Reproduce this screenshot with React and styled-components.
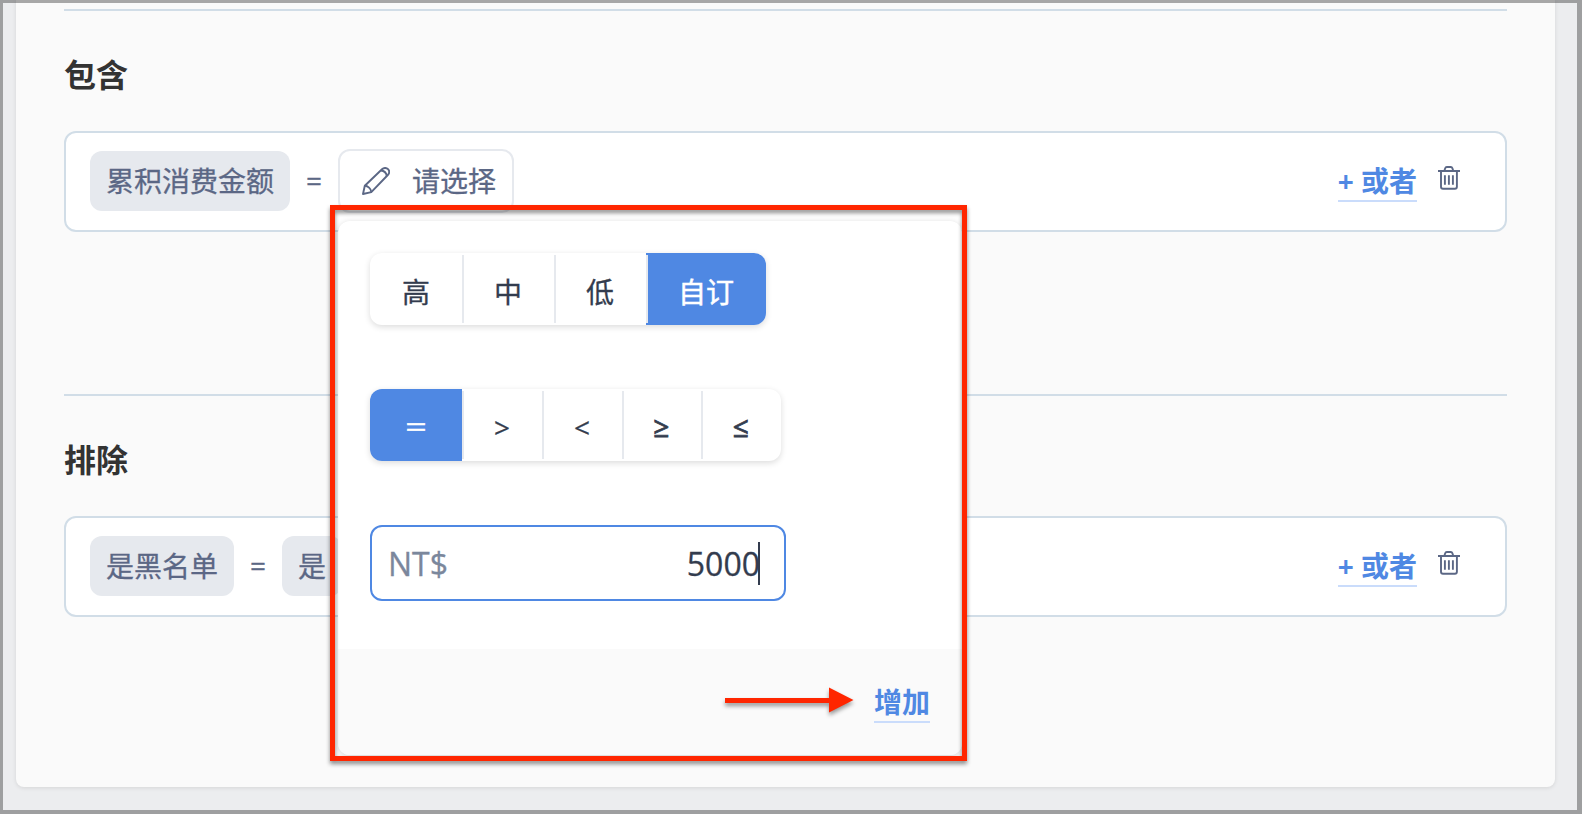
import styled, { createGlobalStyle, css } from 'styled-components';

const GlobalStyle = createGlobalStyle`
  * {
    box-sizing: border-box;
  }

  body {
    margin: 0;
    font-family: 'Open Sans', 'Noto Sans CJK SC', sans-serif;
    font-size: 28px;
    line-height: 40px;
    color: #333c4e;
    -webkit-text-stroke: 0.3px currentColor;
  }

  button,
  input {
    font: inherit;
    border: 0;
    padding: 0;
    background: none;
  }
`;

const Page = styled.div`
  position: relative;
  width: 1582px;
  height: 814px;
  padding: 0 27px 27px 16px;
  overflow: hidden;
  background: #ecedef;
`;

const Frame = styled.div`
  position: absolute;
  inset: 0;
  border: solid rgba(0, 0, 0, 0.33);
  border-width: 3px 5px 4px 3px;
`;

const Card = styled.main`
  height: 787px;
  padding: 9px 48px 0;
  background: #fafafa;
  border-radius: 0 0 8px 8px;
  box-shadow: 0 1px 4px rgba(0, 0, 0, 0.1);
`;

const Section = styled.section`
  height: 385px;
  border-top: 2px solid #d1dde7;
`;

const Title = styled.h2`
  margin: 0;
  padding-top: 40px;
  height: 120px;
  font-size: 32px;
  line-height: 48px;
  font-weight: 700;
  color: #333;
  -webkit-text-stroke: 0;
`;

const Row = styled.div`
  display: flex;
  align-items: flex-start;
  gap: 16px;
  height: 101px;
  padding: 16px 45px 0 24px;
  background: #fff;
  border: 2px solid #d1dde7;
  border-radius: 12px;
  color: #5b6785;
`;

const Chip = styled.span`
  margin-top: 2px;
  height: 60px;
  padding: 10px 16px;
  border-radius: 12px;
  background: #e6e9ee;
`;

const Operator = styled.span`
  width: 16px;
  margin-top: 11px;
`;

const SelectButton = styled.button`
  display: flex;
  gap: 22px;
  width: 176px;
  height: 64px;
  padding: 10px 16px 0 22px;
  border: 2px solid #e6e9ee;
  border-radius: 12px;
  color: inherit;

  svg {
    margin-top: 6px;
  }
`;

const Actions = styled.div`
  display: flex;
  gap: 21px;
  margin-left: auto;

  svg {
    margin-top: 17px;
  }
`;

const LinkButton = styled.button`
  height: 42px;
  margin-top: ${({ $top }) => $top}px;
  padding-top: 1px;
  font-weight: 700;
  line-height: 40px;
  white-space: nowrap;
  color: #4f88e3;
  border-bottom: 2px solid #cadcfb;
  -webkit-text-stroke: 0;
`;

const Popup = styled.div`
  position: absolute;
  left: 338px;
  top: 221px;
  width: 624px;
  height: 534px;
  border-radius: 12px;
  overflow: hidden;
  background: #fff;
  box-shadow: 0 1px 6px rgba(0, 0, 0, 0.15);
`;

const PopupBody = styled.div`
  display: flex;
  flex-direction: column;
  align-items: flex-start;
  gap: 64px;
  height: 428px;
  padding: 32px 32px 0;
`;

const PopupFooter = styled.div`
  display: flex;
  justify-content: flex-end;
  height: 106px;
  padding-right: 32px;
  background: #fafafa;
`;

const Segments = styled.div`
  display: flex;
  height: 72px;
  border-radius: 12px;
  box-shadow: 0 2px 6px rgba(0, 0, 0, 0.14);
`;

const Segment = styled.button`
  position: relative;
  width: ${({ $width }) => $width}px;
  padding-top: ${({ $top = 3 }) => $top}px;
  font-size: ${({ $size = 28 }) => $size}px;
  font-weight: ${({ $bold }) => ($bold ? 500 : 400)};
  color: #333c4e;

  &:first-child {
    border-radius: 12px 0 0 12px;
  }

  &:last-child {
    border-radius: 0 12px 12px 0;
  }

  &:not(:first-child)::before {
    content: '';
    position: absolute;
    left: 0;
    top: 2px;
    bottom: 2px;
    width: 2px;
    background: #e6e9ee;
  }

  ${({ $active }) =>
    $active &&
    css`
      background: #4f88e3;
      color: #fff;
      -webkit-text-stroke-width: 0.5px;
    `}

  ${({ $bold }) =>
    $bold &&
    css`
      -webkit-text-stroke-width: 0.8px;
    `}
`;

const AmountField = styled.label`
  display: flex;
  align-items: center;
  justify-content: space-between;
  width: 416px;
  height: 76px;
  padding: 2px 24px 0 16px;
  border: 2px solid #4f88e3;
  border-radius: 12px;
  font-size: 32px;
`;

const Currency = styled.span`
  color: #7b879c;
`;

const Amount = styled.span`
  position: relative;

  &::after {
    content: '';
    position: absolute;
    right: 0;
    top: -2px;
    width: 2px;
    height: 43px;
    background: #333c4e;
  }
`;

const Highlight = styled.div`
  position: absolute;
  left: 330px;
  top: 205px;
  width: 637px;
  height: 556px;
  border: 5px solid #ff2600;
  filter: drop-shadow(0 3px 2px rgba(0, 0, 0, 0.45));
`;

const ArrowIcon = styled.svg`
  position: absolute;
  left: 725px;
  top: 687px;
  overflow: visible;
  filter: drop-shadow(0 3px 2px rgba(0, 0, 0, 0.4));
`;

const PencilIcon = () => (
  <svg
    width="28"
    height="28"
    viewBox="0 0 28 28"
    fill="none"
    stroke="currentColor"
    strokeWidth="1.9"
    strokeLinejoin="round"
  >
    <path d="M1 27 2.8 18.8 20 2.3C22 .4 24.5.6 26 2.2s1.5 4-.2 5.8L9.3 25.1z" />
    <path d="M2.8 18.8C5.6 18.7 9.2 21.6 9.3 25.1M19 3.5C22 3.8 24.3 6 24.8 9" />
  </svg>
);

const TrashIcon = () => (
  <svg
    width="22"
    height="24"
    viewBox="0 0 22 24"
    fill="none"
    stroke="currentColor"
    strokeWidth="1.9"
  >
    <path d="M0 5h22M6.3 5 7.2 2.2Q7.6 1 8.8 1h4q1.2 0 1.6 1.2l.9 2.8M3 5v15.8q0 2 2 2h11.9q2 0 2-2V5" />
    <path d="M6.9 9.2v9.5M10.9 9.2v9.5M14.9 9.2v9.5" />
  </svg>
);

const RowActions = () => (
  <Actions>
    <LinkButton $top={11}>+ 或者</LinkButton>
    <TrashIcon />
  </Actions>
);

const levels = [
  { label: '高', width: 92, top: 5 },
  { label: '中', width: 92, top: 5 },
  { label: '低', width: 92, top: 5 },
  { label: '自订', width: 120, top: 5, active: true },
];

const operators = [
  { label: '＝', width: 92, top: 4, size: 24, active: true },
  { label: '>', width: 80 },
  { label: '<', width: 80 },
  { label: '≥', width: 79, top: 2, bold: true },
  { label: '≤', width: 80, top: 2, bold: true },
];

const SegmentGroup = ({ items }) => (
  <Segments>
    {items.map(({ label, width, top, size, bold, active }) => (
      <Segment
        key={label}
        type="button"
        $width={width}
        $top={top}
        $size={size}
        $bold={bold}
        $active={active}
      >
        {label}
      </Segment>
    ))}
  </Segments>
);

const App = () => (
  <Page>
    <GlobalStyle />
    <Card>
      <Section>
        <Title>包含</Title>
        <Row>
          <Chip>累积消费金额</Chip>
          <Operator>=</Operator>
          <SelectButton type="button">
            <PencilIcon />
            请选择
          </SelectButton>
          <RowActions />
        </Row>
      </Section>

      <Section>
        <Title>排除</Title>
        <Row>
          <Chip>是黑名单</Chip>
          <Operator>=</Operator>
          <Chip>是</Chip>
          <RowActions />
        </Row>
      </Section>
    </Card>

    <Popup>
      <PopupBody>
        <SegmentGroup items={levels} />
        <SegmentGroup items={operators} />
        <AmountField>
          <Currency>NT$</Currency>
          <Amount>5000</Amount>
        </AmountField>
      </PopupBody>
      <PopupFooter>
        <LinkButton $top={32}>增加</LinkButton>
      </PopupFooter>
    </Popup>

    <Highlight />
    <ArrowIcon width="129" height="26" viewBox="0 0 129 26" fill="#ff2600">
      <path d="M0 11h104V.5l24.5 12.5L104 25.5V16H0z" />
    </ArrowIcon>
    <Frame />
  </Page>
);

export default App;
